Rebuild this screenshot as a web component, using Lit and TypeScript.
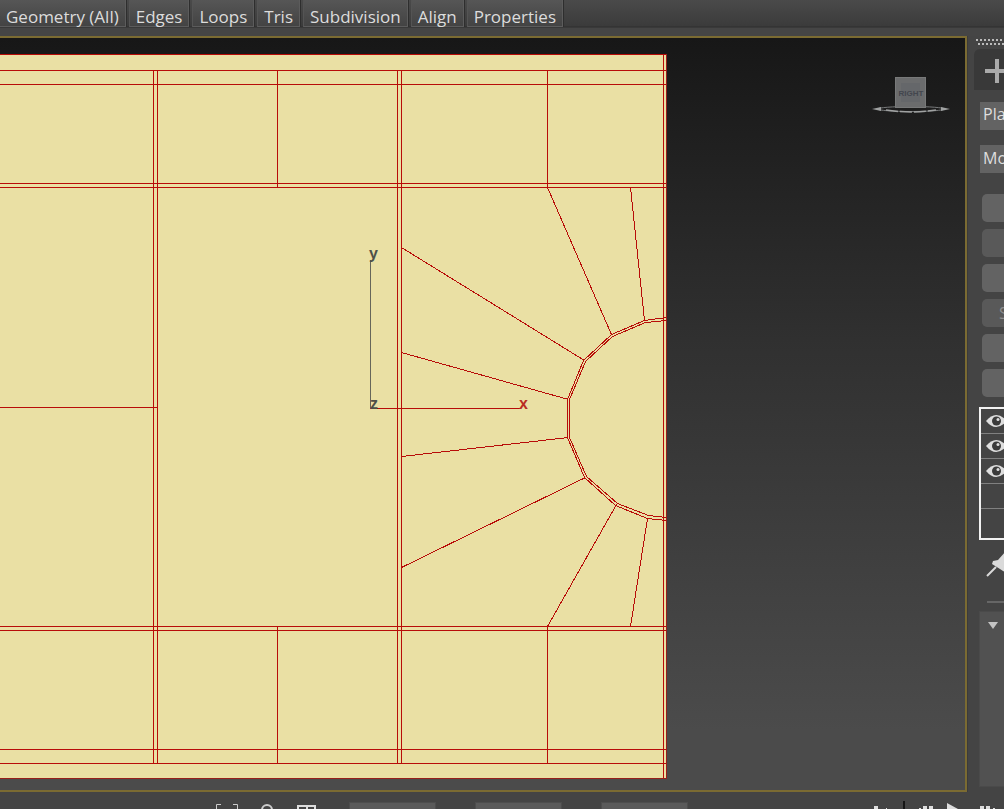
import { LitElement, html, css, svg } from "lit";
import { customElement } from "lit/decorators.js";

const TABS = ["Geometry (All)", "Edges", "Loops", "Tris", "Subdivision", "Align", "Properties"];

/* Edges along the grid: x, y, width, height */
const GRID: number[][] = [
  ...[70, 84, 183, 187, 626, 630, 749, 763].map((y) => [0, y, 667, 1]),
  ...[153, 157, 397, 401].map((x) => [x, 70, 1, 694]),
  ...[277, 547].flatMap((x) => [[x, 70, 1, 118], [x, 626, 1, 138]]),
  [0, 407, 158, 1], [663, 54, 1, 725], [0, 54, 667, 1],
];

/* Radial edges: x1, y1, x2, y2 */
const SPOKES: number[][] = [
  [401, 247, 584, 360], [401, 352, 568, 399], [401, 456, 568, 437], [401, 567, 585, 477],
  [547, 626, 616, 504], [630, 626, 647, 518], [547, 187, 611, 334], [630, 187, 644, 320],
];

@customElement("mesh-viewport")
class MeshViewport extends LitElement {
  static styles = css`
    :host { display: block; min-width: 0; min-height: 0; overflow: hidden; box-sizing: border-box;
      border: 2px solid #7b6b32; border-left: 0;
      background: linear-gradient(#171717, #303030 40%, #4b4b4b 92%, #4b4b4b); }
    .scene { display: block; width: 100%; height: 100%; }
    .face { fill: #eae0a4; }
    .grid { fill: #b80c08; }
    .edge { fill: none; stroke: #b80c08; stroke-width: 1; shape-rendering: crispEdges; }
    .rim { fill: #96201b; }
    .up { fill: #66665a; }
    .axis { font: bold 16px "Liberation Sans", sans-serif; fill: #4d5048; }
    .red { fill: #b92b22; }
    .cube { font: bold 8px "Liberation Sans Narrow", "Liberation Sans", sans-serif; fill: #43464e; }
  `;
  render() {
    return html`<svg class="scene" viewBox="0 38 965 752" preserveAspectRatio="xMinYMin meet" role="img" aria-label="Right view">
      <rect class="face" x="0" y="54" width="667" height="725"></rect>
      ${GRID.map(([x, y, w, h]) => svg`<rect class="grid" x=${x} y=${y} width=${w} height=${h}></rect>`)}
      <g transform="translate(0.5 0.5)">
        ${SPOKES.map(([a, b, c, d]) => svg`<line class="edge" x1=${a} y1=${b} x2=${c} y2=${d}></line>`)}
        <polyline class="edge" points="666,317 644,320 611,334 583,360 567,399 567,437 584,477 615,505 647,518 666,520"></polyline>
        <polyline class="edge" points="666,320 645,322 612,336 585,361 569,399 569,437 586,476 617,503 648,515 666,517"></polyline>
      </g>
      <rect class="grid" x="567" y="399" width="1" height="38"></rect>
      <rect class="grid" x="569" y="399" width="1" height="38"></rect>
      <path class="rim" d="M666 54H667V779H0V778H666Z"></path>
      <rect class="up" x="370" y="260" width="1" height="148"></rect>
      <rect class="grid" x="370" y="408" width="151" height="1"></rect>
      <text class="axis" x="369" y="259">y</text>
      <text class="axis" x="370" y="409">z</text>
      <text class="axis red" x="519" y="409">x</text>
      <ellipse cx="911" cy="109" rx="33" ry="2.5" fill="none" stroke="#77797a"></ellipse>
      <path d="M872 109L881 107V111ZM950 109L941 107V111Z" fill="#a0a2a2"></path>
      <path d="M886 110Q911 114 936 110" fill="none" stroke="#a0a2a2" stroke-width="1.5" stroke-dasharray="12 2"></path>
      <rect x="895" y="77" width="31" height="31" fill="#6b6c6d"></rect>
      <rect x="895.5" y="77.5" width="30" height="30" fill="none" stroke="#787979"></rect>
      <rect x="901" y="83" width="19" height="19" fill="#65676a"></rect>
      <text class="cube" x="911" y="96" text-anchor="middle">RIGHT</text>
    </svg>`;
  }
}

@customElement("command-panel")
class CommandPanel extends LitElement {
  static styles = css`
    :host { display: block; overflow: hidden; min-height: 0; background: #444; color: #dedede;
      font: 16px "Open Sans", sans-serif; }
    .body { width: 220px; height: 100%; box-sizing: border-box; padding: 3px 0 5px 6px; display: flex; flex-direction: column;
      border-left: 1px solid #3b3b3b; }
    .grip { height: 6px; margin-left: 2px; flex: none;
      background: repeating-linear-gradient(90deg, #bbb 0 2px, transparent 2px 4px) 0 0 / 100% 2px no-repeat,
        repeating-linear-gradient(90deg, #bbb 0 2px, transparent 2px 4px) 2px 4px / 100% 2px no-repeat; }
    .modes { box-sizing: border-box; margin-top: 4px; height: 41px; flex: none; background: #393939; border-radius: 6px 0 0 0; padding: 3px 0 0 11px; display: flex; align-items: center; }
    button, input, select { font: inherit; color: inherit; border: 0; padding: 0; margin: 0; background: none; box-sizing: border-box; appearance: none; border-radius: 0; }
    .modes button { height: 24px; }
    svg { display: block; }
    .field { flex: none; height: 28px; margin: 12px 0 0 6px; padding: 0 0 4px 3px; background: #636363; }
    .field + .field { margin-top: 15px; padding-bottom: 2px; }
    .stack { flex: none; margin: 21px 0 0 8px; display: grid; gap: 7px; }
    .stack button { height: 28px; border-radius: 5px; background: #636363; text-align: left; padding-left: 17px; }
    .stack .dim { background: #595959; color: #8d8d8d; }
    .list { flex: none; list-style: none; margin: 10px 0 0 5px; padding: 0 0 5px; border: 2px solid #f2f2f2; }
    .list li { height: 24px; border-bottom: 1px solid #808080; padding-left: 5px; display: flex; align-items: center; }
    .list li:last-child { border: 0; }
    .pin { margin: 11px 0 0 12px; flex: none; width: 24px; height: 26px; }
    .rule { flex: none; height: 2px; margin: 24px 0 0 13px; background: #666; }
    .rollout { flex: 1; min-height: 0; margin: 8px 0 0 5px; background: #515151; padding: 10px 0 0 8px; border: 1px solid #4a4a4a; border-right: 0; }
  `;
  render() {
    const eye = html`<svg width="24" height="16" viewBox="0 0 24 16"><path d="M0 8Q10 -4 21 8Q10 20 0 8Z" fill="#dedede"></path><circle cx="10.5" cy="8" r="4.5" fill="#3b3b3b"></circle><circle cx="12" cy="6.5" r="1.5" fill="#dedede"></circle></svg>`;
    return html`<div class="body">
      <div class="grip"></div>
      <div class="modes"><button aria-label="Create"><svg width="24" height="24"><path d="M12 0V24M0 12H24" stroke="#aaa" stroke-width="4"></path></svg></button></div>
      <input class="field" aria-label="Object name" value="Pla">
      <select class="field" aria-label="Modifier list"><option>Mo</option></select>
      <div class="stack">
        ${["", "", "", "S", "", ""].map((t, i) => html`<button class=${i === 1 || i === 3 ? "dim" : ""} aria-label=${t || "Modifier " + (i + 1)}>${t}</button>`)}
      </div>
      <ul class="list">${[1, 1, 1, 0, 0].map((on) => html`<li>${on ? eye : ""}</li>`)}</ul>
      <button class="pin" aria-label="Pin stack"><svg width="24" height="26"><path d="M1 25L10 16" stroke="#dadada" stroke-width="2"></path><path d="M7 10L12 9L20 0L24 3V24L17 20L14 18L6 13Z" fill="#dadada"></path></svg></button>
      <div class="rule"></div>
      <div class="rollout"><svg width="10" height="7"><path d="M0 0H10L5 7Z" fill="#c4c4c4"></path></svg></div>
    </div>`;
  }
}

@customElement("status-bar")
class StatusBar extends LitElement {
  static styles = css`
    :host { display: flex; justify-content: space-between; overflow: hidden; background: #444; }
    .group { display: flex; }
    .left { padding-left: 216px; }
    button { border: 0; padding: 0; background: none; height: 17px; }
    svg { display: block; }
    .tools { display: flex; gap: 22px; margin-right: 33px; }
    .coords { display: flex; gap: 39px; padding-top: 10px; }
    .coords input { width: 87px; height: 24px; box-sizing: border-box; border: 1px solid #4d4d4d; background: #5a5a5a; padding: 0; }
    .play { gap: 13px; }
    .bar { width: 2px; margin-top: 9px; background: #151515; }
  `;
  render() {
    return html`
      <div class="group left">
        <div class="tools">
          <button aria-label="Isolate"><svg width="22" height="17"><path d="M0.5 17V12.5H5M17 12.5H21.5V17" fill="none" stroke="#ccc"></path></svg></button>
          <button aria-label="Lock"><svg width="14" height="17"><circle cx="7" cy="18" r="5" fill="none" stroke="#ccc" stroke-width="2"></circle></svg></button>
          <button aria-label="Grid"><svg width="20" height="17"><path d="M2 17V14H20M19 13V17M11 14V17" fill="none" stroke="#ddd" stroke-width="2"></path></svg></button>
        </div>
        <div class="coords"><input aria-label="X"><input aria-label="Y"><input aria-label="Z"></div>
      </div>
      <div class="group play">
        <button aria-label="Go to start"><svg width="17" height="17"><path d="M1 14h4v3H1zM13 16h1v1h-1z" fill="#ddd"></path></svg></button>
        <span class="bar"></span>
        <button aria-label="Previous frame"><svg width="16" height="17"><path d="M5 14h4v3H5zM11 14h4v3h-4zM1 16h2v1H1z" fill="#ddd"></path></svg></button>
        <button aria-label="Play"><svg width="20" height="17"><path d="M0 11L11 17H0Z" fill="#ddd"></path></svg></button>
        <button aria-label="Next frame"><svg width="24" height="17"><path d="M0 14h4v3H0zM6 14h4v3H6zM13 16h2v1h-2z" fill="#ddd"></path></svg></button>
      </div>`;
  }
}

@customElement("app-root")
class AppRoot extends LitElement {
  static styles = css`
    :host { display: grid; height: 100vh; overflow: hidden; background: #444;
      grid-template: 36px minmax(0, 1fr) 17px / minmax(0, 1fr) 37px; }
    .ribbon { grid-column: 1 / -1; display: flex; align-items: flex-start; background: linear-gradient(#4a4a4a, #3b3b3b 26px, #2d2d2d 27px, #454545 28px, #454545); }
    .tab { height: 27px; box-sizing: border-box; margin: 0 3px 0 0; padding: 2px 6px 0; border: 1px solid #5c5c5c; border-top: 0; border-left-color: #545454;
      background: linear-gradient(#565656, #434343); box-shadow: 1px 0 #2e2e2e; color: #dcdcdc; white-space: nowrap;
      font: 17px/30px "Open Sans", sans-serif; }
    .tab:first-child { border-left: 0; }
    .status { grid-column: 1 / -1; }
  `;
  render() {
    return html`
      <nav class="ribbon">${TABS.map((t) => html`<button class="tab">${t}</button>`)}</nav>
      <mesh-viewport></mesh-viewport>
      <command-panel></command-panel>
      <status-bar class="status"></status-bar>`;
  }
}
